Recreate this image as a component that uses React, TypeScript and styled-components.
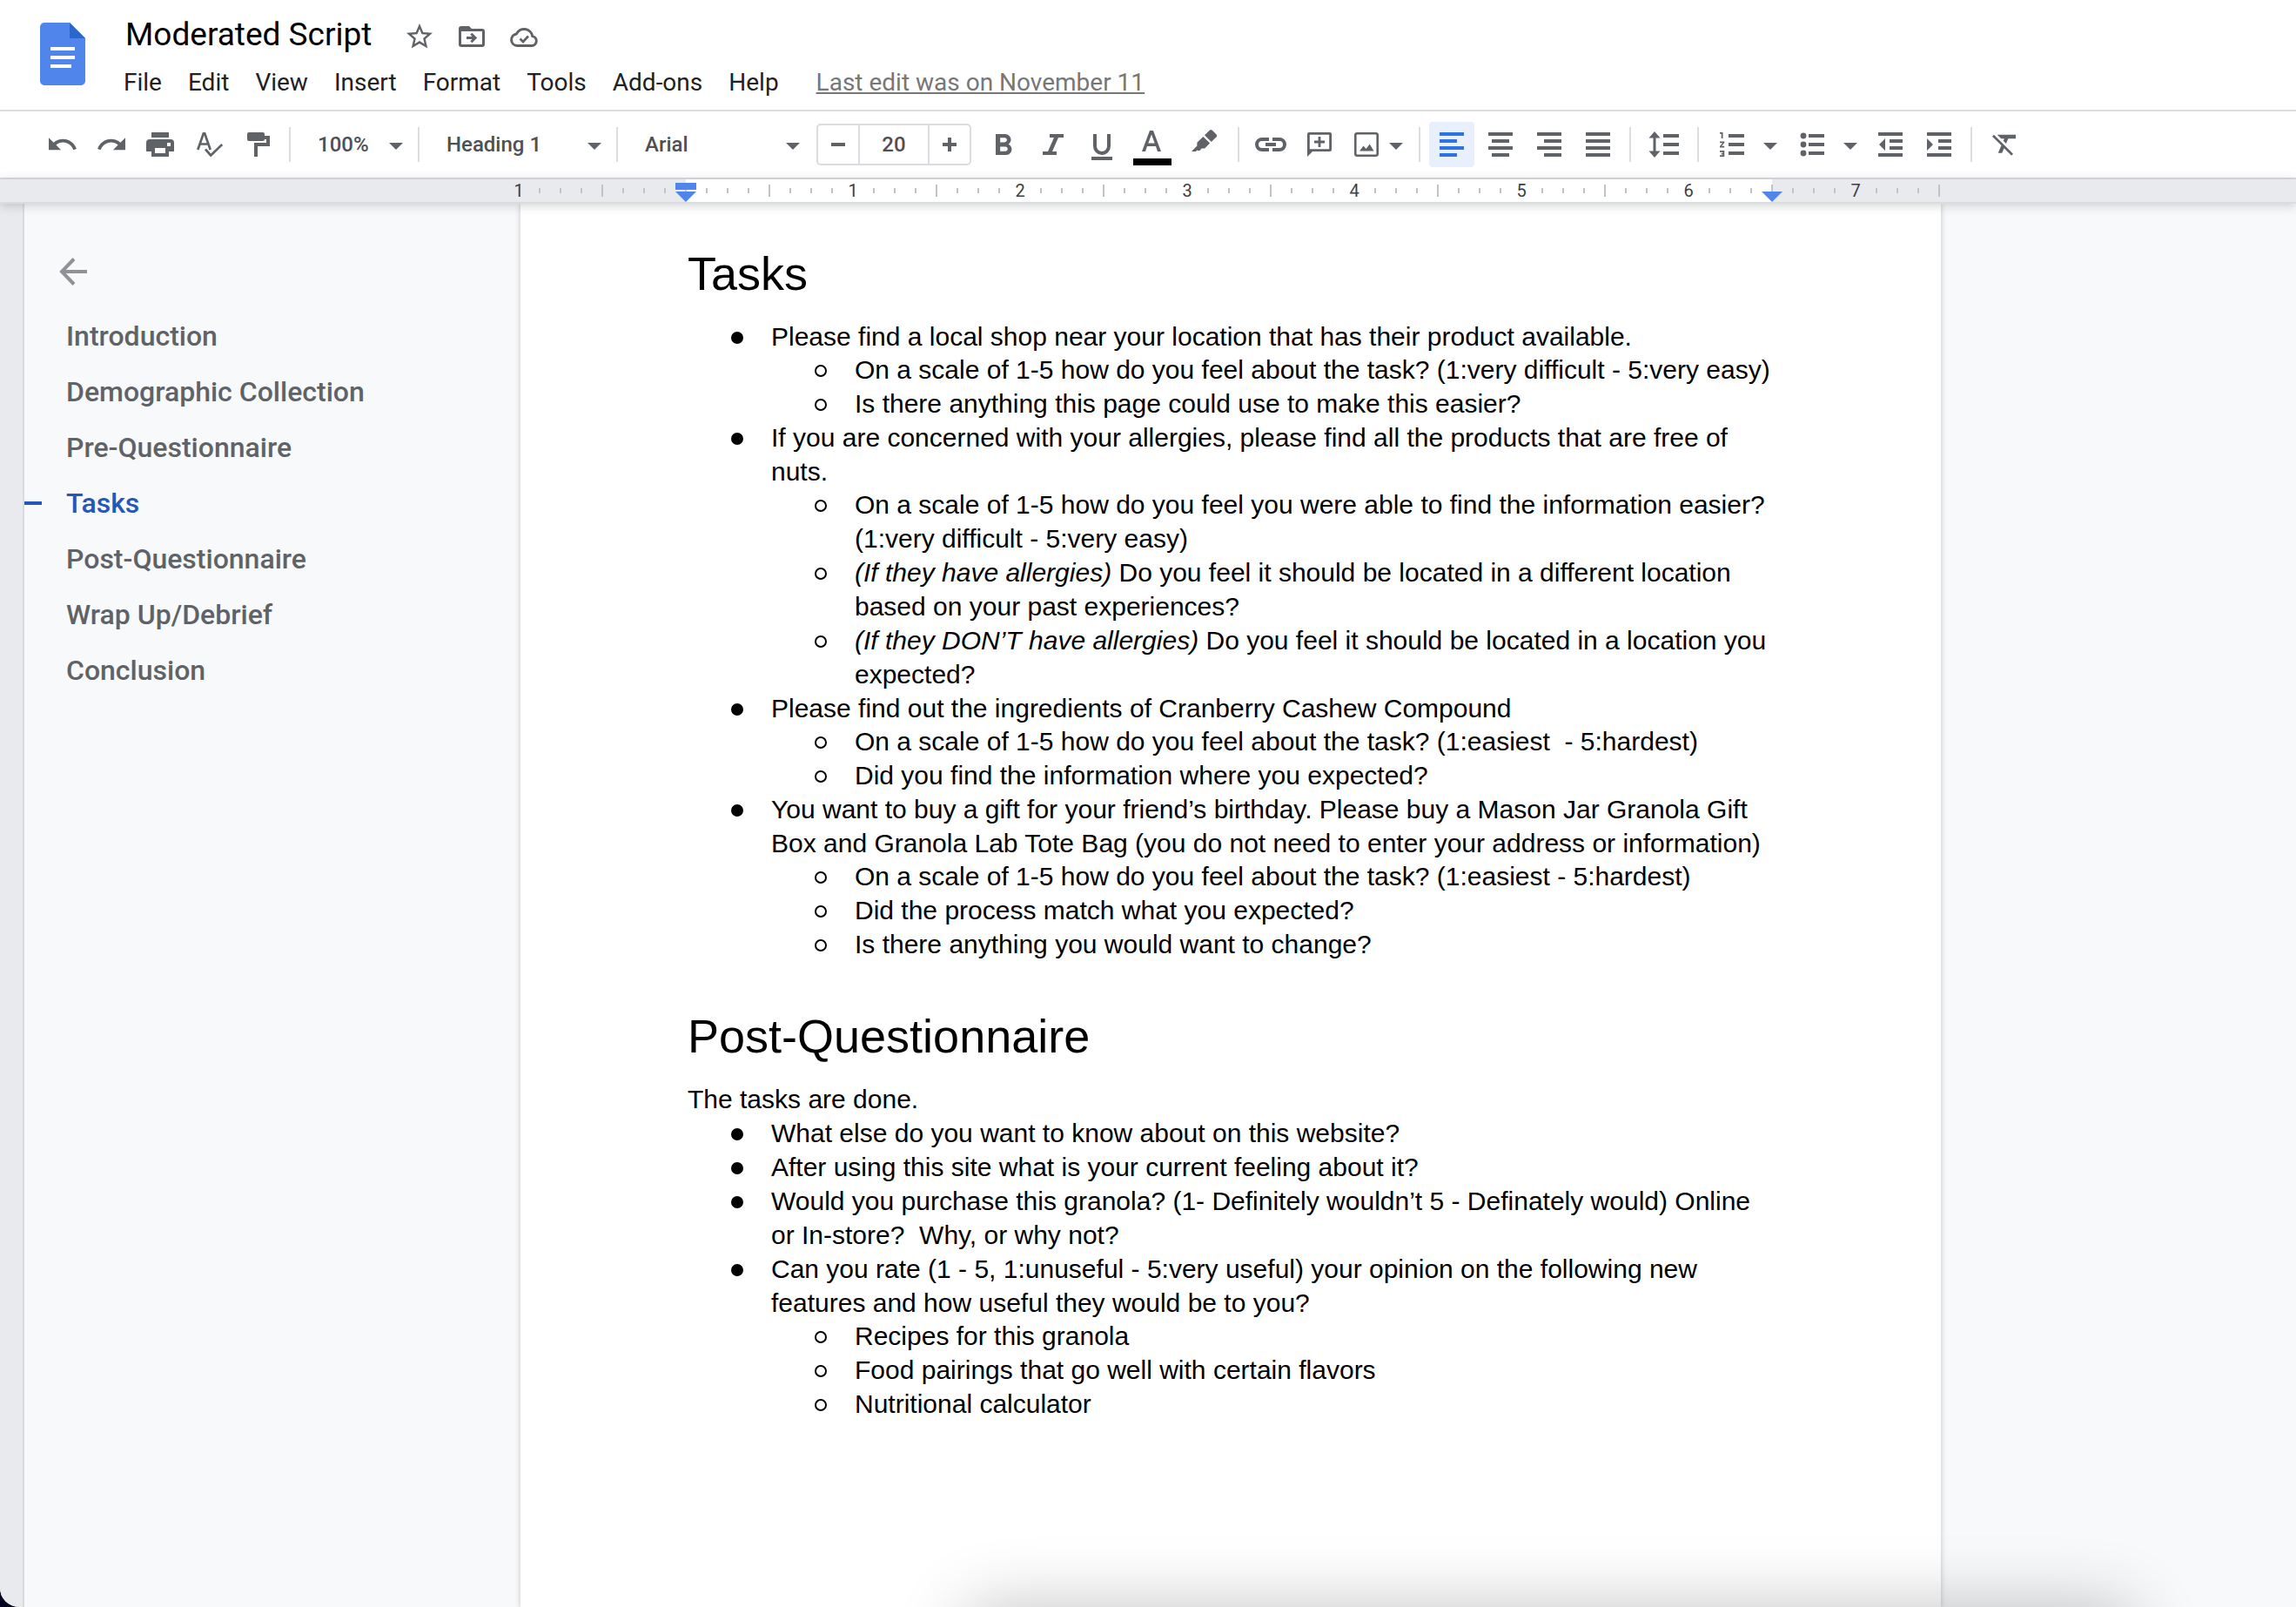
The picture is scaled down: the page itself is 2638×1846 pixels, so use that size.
import React from "react";
import styled, { createGlobalStyle } from "styled-components";

const ICON = "#5f6368";
const LINE = "#dadce0";

const GlobalStyle = createGlobalStyle`
  *, *::before { box-sizing: border-box; }
  body { margin: 0; background: #00001f; }
  button, input, select { font: inherit; color: inherit; }
  button { border: 0; padding: 0; background: none; cursor: pointer; }
`;

const Window = styled.div`
  position: relative;
  display: flex;
  flex-direction: column;
  min-height: 100vh;
  overflow: hidden;
  border-bottom-left-radius: 22px;
  background: #f8f9fb;
  font-family: Roboto, "Liberation Sans", sans-serif;
  color: #202124;
`;

const DockShadow = styled.div`
  position: absolute;
  top: 100%;
  left: 42%;
  right: 7%;
  height: 120px;
  border-radius: 30px;
  box-shadow: 0 0 80px rgba(0, 0, 0, 0.24);
  pointer-events: none;
`;

/* ---------- header ---------- */

const Header = styled.header`
  display: flex;
  align-items: flex-start;
  gap: 29px;
  height: 128px;
  padding-left: 46px;
  background: #fff;
  border-bottom: 2px solid ${LINE};
`;

const Logo = styled.a`
  display: block;
  height: 72px;
  margin-top: 26px;
`;

const HeaderMain = styled.div`
  display: flex;
  flex-direction: column;
  gap: 11px;
  padding-top: 20px;
`;

const TitleRow = styled.div`
  display: flex;
  align-items: center;
  gap: 24px;
  padding-left: 17px;
`;

const TitleInput = styled.input`
  width: 296px;
  height: 44px;
  padding: 0 0 6px;
  border: 0;
  outline: 0;
  background: none;
  color: #000;
  font-size: 37px;
`;

const TitleButton = styled.button`
  display: flex;
  width: 36px;
  height: 36px;
  color: ${ICON};
`;

const MenuBar = styled.nav`
  display: flex;
  align-items: center;
`;

const MenuButton = styled.button`
  height: 40px;
  padding: 0 15px;
  font-size: 28px;
  line-height: 40px;
`;

const LastEdit = styled.a`
  margin-left: 28px;
  color: #777;
  font-size: 28px;
  line-height: 40px;
  text-decoration: underline;
`;

/* ---------- toolbar ---------- */

const Toolbar = styled.div`
  display: flex;
  align-items: center;
  gap: 4px;
  height: 78px;
  padding-left: 46px;
  background: #fff;
  border-bottom: 2px solid ${LINE};
  color: ${ICON};
  font-size: 24px;
  font-weight: 500;
`;

const Tool = styled.button<{ $active?: boolean; $width?: number }>`
  display: flex;
  align-items: center;
  justify-content: center;
  flex: none;
  width: ${(p) => p.$width ?? 52}px;
  height: 52px;
  border-radius: 4px;
  background: ${(p) => (p.$active ? "#e8f0fe" : "none")};
  color: ${(p) => (p.$active ? "#2f73e0" : ICON)};
`;

const MenuTool = styled.button<{ $pad: number; $gap: number }>`
  display: flex;
  align-items: center;
  flex: none;
  gap: ${(p) => p.$gap}px;
  height: 52px;
  padding: 0 8px 0 ${(p) => p.$pad}px;
  color: ${ICON};
`;

const Divider = styled.span`
  flex: none;
  width: 2px;
  height: 40px;
  margin: 0 6px;
  background: ${LINE};
`;

const SelectBox = styled.div<{ $width: number }>`
  display: grid;
  align-items: center;
  flex: none;
  width: ${(p) => p.$width}px;
  height: 52px;

  > * { grid-area: 1 / 1; }
  > svg { justify-self: end; margin-right: 7px; pointer-events: none; }
`;

const Select = styled.select`
  width: 100%;
  height: 52px;
  padding: 0 21px;
  border: 0;
  outline: 0;
  background: none;
  appearance: none;
  color: #4d5054;
`;

const CaretSvg = styled.svg`
  display: block;
  flex: none;
  width: 16px;
  height: 8px;
  margin-top: 4px;
`;

const Stepper = styled.div`
  display: flex;
  flex: none;
  height: 48px;
  margin: 0 8px;
  border: 2px solid ${LINE};
  border-radius: 5px;
`;

const StepButton = styled.button`
  display: flex;
  align-items: center;
  justify-content: center;
  width: 46px;
`;

const SizeInput = styled.input`
  width: 82px;
  padding: 0;
  border: solid ${LINE};
  border-width: 0 2px;
  outline: 0;
  background: none;
  color: #4d5054;
  text-align: center;
`;

const IconSvg = styled.svg`
  display: block;
  flex: none;
  width: 36px;
  height: 36px;
  overflow: visible;
`;

/* ---------- ruler ---------- */

const Ruler = styled.div`
  position: relative;
  z-index: 1;
  height: 28px;
  padding-left: 584px;
  border-bottom: 2px solid ${LINE};
  background: linear-gradient(#fff, #fff) 788px 0 / 1248px 100% no-repeat #e8eaed;
  box-shadow: 0 2px 12px rgba(60, 64, 67, 0.24);
`;

const RulerTrack = styled.div`
  position: relative;
  display: flex;
  align-items: center;
  height: 26px;
`;

const RulerCell = styled.span`
  display: flex;
  flex: none;
  justify-content: center;
  width: 24px;
  color: #3c4043;
  font-size: 20px;
  line-height: 26px;
`;

const Tick = styled.i<{ $tall: boolean }>`
  width: 2px;
  height: ${(p) => (p.$tall ? 14 : 6)}px;
  background: #c0c3c8;
`;

const IndentMarker = styled.svg<{ $x: number }>`
  position: absolute;
  bottom: 0;
  left: ${(p) => p.$x}px;
  width: 24px;
  height: 22px;
`;

/* ---------- workspace ---------- */

const Workspace = styled.div`
  display: flex;
  flex: 1;
`;

const EdgeRuler = styled.div`
  flex: none;
  width: 28px;
  border-right: 2px solid #d8dadb;
  background: #e8eaed;
`;

const Outline = styled.aside`
  flex: none;
  width: 570px;
  padding: 60px 0 0 36px;
`;

const BackButton = styled.button`
  display: flex;
  margin-bottom: 24px;
  color: #909296;
`;

const OutlineList = styled.ul`
  margin: 0;
  padding: 0;
  list-style: none;
`;

const OutlineItem = styled.li<{ $current?: boolean }>`
  display: flex;
  align-items: center;
  gap: 28px;
  height: 64px;
  margin-left: -36px;

  &::before {
    content: "";
    width: 20px;
    height: 4px;
    background: ${(p) => (p.$current ? "#2457b8" : "transparent")};
  }
`;

const OutlineLink = styled.a<{ $current?: boolean }>`
  color: ${(p) => (p.$current ? "#2457b8" : ICON)};
  font-size: 32px;
  font-weight: 500;
  line-height: 40px;
  text-decoration: none;
`;

const Page = styled.main`
  flex: none;
  width: 1632px;
  padding: 45px 190px 190px 192px;
  background: #fff;
  box-shadow: 0 0 6px rgba(60, 64, 67, 0.3);
  color: #000;
  font-family: "Liberation Sans", Arial, sans-serif;
  font-size: 30px;
  line-height: 39px;
`;

const Heading = styled.h1`
  margin: 0 0 18px;
  font-size: 54px;
  font-weight: 400;
  line-height: 70px;

  ul + & { margin-top: 51px; }
`;

const Paragraph = styled.p`
  margin: 0;
`;

const BulletList = styled.ul`
  margin: 0;
  padding: 0 0 0 50px;
  list-style: none;

  & & { margin-top: -1px; }
`;

const BulletItem = styled.li<{ $level: number }>`
  display: grid;
  grid-template-columns: 46px 1fr;

  &::before {
    content: "";
    width: 14px;
    height: 14px;
    margin-top: 14px;
    border: ${(p) => (p.$level === 1 ? 7 : 2)}px solid #000;
    border-radius: 50%;
  }
`;

const ItemText = styled.div`
  white-space: pre-line;
`;

/* ---------- icons ---------- */

const icons = {
  star: (
    <path transform="scale(1.5)" d="M22 9.24l-7.19-.62L12 2 9.19 8.63 2 9.24l5.46 4.73L5.82 21 12 17.27 18.18 21l-1.63-7.03L22 9.24zM12 15.4l-3.76 2.27 1-4.28-3.32-2.88 4.38-.38L12 6.1l1.71 4.04 4.38.38-3.32 2.88 1 4.28L12 15.4z" />
  ),
  move: (
    <>
      <path fillRule="evenodd" d="M6 6h9l3 3h12a3 3 0 0 1 3 3v15a3 3 0 0 1-3 3H6a3 3 0 0 1-3-3V9a3 3 0 0 1 3-3zm0 6v15h24V12z" />
      <path d="M12 18h6.500l-2.200-2.200 2.100-2.100 5.800 5.800-5.800 5.800-2.100-2.100 2.200-2.200H12z" />
    </>
  ),
  cloud: (
    <g fill="none" stroke="currentColor" strokeWidth="3">
      <path d="M10 28.500h17a5.500 5.500 0 0 0 .8-10.900A9.800 9.800 0 0 0 9.300 15 6.800 6.800 0 0 0 10 28.500z" />
      <path d="M13.500 20.500l3.500 3.500 6-6.500" strokeWidth="2.700" />
    </g>
  ),
  print: (
    <path fillRule="evenodd" d="M8 4h20v6H8zM6 12h24a4 4 0 0 1 4 4v10h-6v6H8v-6H2V16a4 4 0 0 1 4-4zm6 10v6h12v-6zM26 16v4h4v-4z" />
  ),
  spell: (
    <g fill="none" stroke="currentColor" strokeWidth="2.700">
      <path d="M5.300 24L11.800 5.300h1.400L19.700 24M8 17.500h9" />
      <path d="M14 23.500l6.200 7L33.200 18" />
    </g>
  ),
  paint: <path d="M8 4h16a2 2 0 0 1 2 2v2h6v12H18v12h-4V16h14v-4h-2a2 2 0 0 1-2 2H8a2 2 0 0 1-2-2V6a2 2 0 0 1 2-2z" />,
  italic: <path d="M14 6h16v4h-6l-7 16h5v4H6v-4h6l7-16h-5z" />,
  underline: (
    <>
      <path d="M10 6v14a8 8 0 0 0 16 0V6" fill="none" stroke="currentColor" strokeWidth="4" />
      <path d="M6 32h24v4H6z" />
    </>
  ),
  textColor: (
    <>
      <path fillRule="evenodd" d="M17 2h4l9 24h-4l-2-6H14l-2 6H8zm-1.700 14.500h7.400L19 6.500z" />
      <path d="M-2 34h44v8H-2z" fill="#000" />
    </>
  ),
  marker: (
    <>
      <path d="M26 1.500a2 2 0 0 1 2.600 0l5 5a2 2 0 0 1 0 2.800L27.800 15 20 7.300z" />
      <path d="M18.400 8.900l7.700 7.700-6 5.800h-3.500L14.500 25h-2.800v-1l-1.700 2H5l6.400-6.600v-3.600z" />
    </>
  ),
  link: (
    <path d="M16 12H8a6 6 0 0 0 0 12h8M20 12h8a6 6 0 0 1 0 12h-8M12 18h12" fill="none" stroke="currentColor" strokeWidth="4" />
  ),
  comment: (
    <>
      <path fillRule="evenodd" d="M6 4h24a2 2 0 0 1 2 2v18a2 2 0 0 1-2 2H10l-6 6V6a2 2 0 0 1 2-2zm.8 2.800v16.400h22.400V6.800z" />
      <path d="M16.600 9h2.800v4.600H24v2.800h-4.600V21h-2.800v-4.600H12v-2.800h4.600z" />
    </>
  ),
  image: (
    <>
      <rect x="5.300" y="5.300" width="25.400" height="25.400" rx="2" fill="none" stroke="currentColor" strokeWidth="2.600" />
      <path d="M10 25.500l4.500-6 3 3.600 4.200-5.600 4.800 8z" />
    </>
  ),
  left: <path d="M4 4h28v4H4zM4 12h20v4H4zM4 20h28v4H4zM4 28h20v4H4z" />,
  center: <path d="M4 4h28v4H4zM8 12h20v4H8zM4 20h28v4H4zM8 28h20v4H8z" />,
  right: <path d="M4 4h28v4H4zM12 12h20v4H12zM4 20h28v4H4zM12 28h20v4H12z" />,
  justify: <path d="M4 4h28v4H4zM4 12h28v4H4zM4 20h28v4H4zM4 28h28v4H4z" />,
  spacing: <path d="M7 3l6.500 7.500h-5v15h5L7 33 .5 25.500h5v-15h-5zM17 6h18v4H17zM17 16h18v4H17zM17 26h18v4H17z" />,
  numbered: (
    <>
      <path transform="translate(.5 -3) scale(1.750)" d="M2 17h2v.5H3v1h1v.5H2v1h3v-4H2v1zm1-9h1V4H2v1h1v3zm-1 3h1.800L2 13.100v.9h3v-1H3.200L5 10.900V10H2v1z" />
      <path d="M14 6h18v4H14zM14 16h18v4H14zM14 26h18v4H14z" />
    </>
  ),
  bulleted: (
    <>
      <circle cx="8" cy="8" r="3.400" />
      <circle cx="8" cy="18" r="3.400" />
      <circle cx="8" cy="28" r="3.400" />
      <path d="M14 6h18v4H14zM14 16h18v4H14zM14 26h18v4H14z" />
    </>
  ),
  outdent: <path d="M4 4h28v4H4zM17 12h15v4H17zM17 20h15v4H17zM4 28h28v4H4zM12 11v14l-7-7z" />,
  indent: <path d="M4 4h28v4H4zM17 12h15v4H17zM17 20h15v4H17zM4 28h28v4H4zM4 11v14l7-7z" />,
  minus: <path d="M10 16h16v4H10z" />,
  plus: <path d="M16 10h4v6h6v4h-6v6h-4v-6h-6v-4h6z" />,
  back: <path d="M36 18H8M21 3.500L7 18l14 14.500" fill="none" stroke="currentColor" strokeWidth="4" />,
};

const boxedIcons: Record<string, [string, string]> = {
  undo: ["0.7 0.5 23.1 23.1", "M12.5 8c-2.65 0-5.05.99-6.9 2.6L2 7v9h9l-3.62-3.62c1.39-1.16 3.16-1.88 5.12-1.88 3.54 0 6.55 2.31 7.6 5.5l2.37-.78C21.08 11.03 17.15 8 12.5 8z"],
  redo: ["0.2 0.5 23.1 23.1", "M18.4 10.6C16.55 8.99 14.15 8 11.5 8c-4.65 0-8.58 3.03-9.96 7.22L3.9 16c1.05-3.19 4.05-5.5 7.6-5.5 1.95 0 3.73.72 5.12 1.88L13 16h9V7l-3.6 3.6z"],
  bold: ["2.33 0.5 21 21", "M15.6 10.79c.97-.67 1.65-1.77 1.65-2.79 0-2.26-1.75-4-4-4H7v14h7.04c2.09 0 3.71-1.7 3.71-3.79 0-1.52-.86-2.82-2.15-3.42zM10 6.5h3c.83 0 1.5.67 1.5 1.5s-.67 1.5-1.5 1.5h-3v-3zm3.5 9H10v-3h3.5c.83 0 1.5.67 1.5 1.5s-.67 1.5-1.5 1.5z"],
  clear: ["-1.33 0.5 24 24", "M3.27 5L2 6.27l6.97 6.97L6.5 19h3l1.57-3.66L16.73 21 18 19.73 3.55 5.27 3.27 5zM6 5v.18L8.82 8h2.4l-.72 1.68 2.1 2.1L14.21 8H20V5H6z"],
};

function Icon({ name }: { name: string }) {
  const boxed = boxedIcons[name];
  return (
    <IconSvg viewBox={boxed ? boxed[0] : "0 0 36 36"} fill="currentColor" aria-hidden="true">
      {boxed ? <path d={boxed[1]} /> : icons[name as keyof typeof icons]}
    </IconSvg>
  );
}

const Caret = () => (
  <CaretSvg viewBox="0 0 16 8" fill={ICON} aria-hidden="true">
    <path d="M0 0h16L8 8z" />
  </CaretSvg>
);

type ToolDef = { icon: string; label: string; active?: boolean; width?: number };

const Tools = ({ items }: { items: ToolDef[] }) => (
  <>
    {items.map((t) => (
      <Tool key={t.icon} type="button" aria-label={t.label} $active={t.active} $width={t.width}>
        <Icon name={t.icon} />
      </Tool>
    ))}
  </>
);

const Dropdown = ({ label, width, options }: { label: string; width: number; options: string[] }) => (
  <SelectBox $width={width}>
    <Select aria-label={label} defaultValue={options[0]}>
      {options.map((o) => (
        <option key={o}>{o}</option>
      ))}
    </Select>
    <Caret />
  </SelectBox>
);

/* ---------- document content ---------- */

type Item = { text: React.ReactNode; children?: Item[] };

const taskItems: Item[] = [
  {
    text: "Please find a local shop near your location that has their product available.",
    children: [
      { text: "On a scale of 1-5 how do you feel about the task? (1:very difficult - 5:very easy)" },
      { text: "Is there anything this page could use to make this easier?" },
    ],
  },
  {
    text: "If you are concerned with your allergies, please find all the products that are free of\nnuts.",
    children: [
      { text: "On a scale of 1-5 how do you feel you were able to find the information easier?\n(1:very difficult - 5:very easy)" },
      { text: <><em>(If they have allergies)</em>{" Do you feel it should be located in a different location"}<br />based on your past experiences?</> },
      { text: <><em>(If they DON’T have allergies)</em>{" Do you feel it should be located in a location you"}<br />expected?</> },
    ],
  },
  {
    text: "Please find out the ingredients of Cranberry Cashew Compound",
    children: [
      { text: "On a scale of 1-5 how do you feel about the task? (1:easiest \u00a0- 5:hardest)" },
      { text: "Did you find the information where you expected?" },
    ],
  },
  {
    text: "You want to buy a gift for your friend’s birthday. Please buy a Mason Jar Granola Gift\nBox and Granola Lab Tote Bag (you do not need to enter your address or information)",
    children: [
      { text: "On a scale of 1-5 how do you feel about the task? (1:easiest - 5:hardest)" },
      { text: "Did the process match what you expected?" },
      { text: "Is there anything you would want to change?" },
    ],
  },
];

const postItems: Item[] = [
  { text: "What else do you want to know about on this website?" },
  { text: "After using this site what is your current feeling about it?" },
  { text: "Would you purchase this granola? (1- Definitely wouldn’t 5 - Definately would) Online\nor In-store? \u00a0Why, or why not?" },
  {
    text: "Can you rate (1 - 5, 1:unuseful - 5:very useful) your opinion on the following new\nfeatures and how useful they would be to you?",
    children: [
      { text: "Recipes for this granola" },
      { text: "Food pairings that go well with certain flavors" },
      { text: "Nutritional calculator" },
    ],
  },
];

const Bullets = ({ items, level = 1 }: { items: Item[]; level?: number }) => (
  <BulletList>
    {items.map((item, i) => (
      <BulletItem key={i} $level={level}>
        <div>
          <ItemText>{item.text}</ItemText>
          {item.children && <Bullets items={item.children} level={level + 1} />}
        </div>
      </BulletItem>
    ))}
  </BulletList>
);

const menus = ["File", "Edit", "View", "Insert", "Format", "Tools", "Add-ons", "Help"];
const sections = ["Introduction", "Demographic Collection", "Pre-Questionnaire", "Tasks", "Post-Questionnaire", "Wrap Up/Debrief", "Conclusion"];

// One cell for each eighth of an inch; the margin starts at the ninth cell.
const rulerCells = Array.from({ length: 69 }, (_, i) => {
  const inch = (i - 8) / 8;
  if (i % 8 === 0 && inch !== 0) return <RulerCell key={i}>{Math.abs(inch)}</RulerCell>;
  return (
    <RulerCell key={i}>
      <Tick $tall={i % 4 === 0} />
    </RulerCell>
  );
});

export default function App() {
  return (
    <>
      <GlobalStyle />
      <Window>
        <Header>
          <Logo href="#" aria-label="Docs home">
            <svg width="52" height="72" viewBox="0 0 52 72" aria-hidden="true">
              <path d="M5 0h29l18 18v49a5 5 0 0 1-5 5H5a5 5 0 0 1-5-5V5a5 5 0 0 1 5-5z" fill="#5086ec" />
              <path d="M34 0l18 18H34z" fill="#2a66cc" />
              <path d="M12 28h28v4H12zM12 38h28v4H12zM12 48h24v4H12z" fill="#fff" />
            </svg>
          </Logo>
          <HeaderMain>
            <TitleRow>
              <TitleInput aria-label="Document title" defaultValue="Moderated Script" />
              <TitleButton type="button" aria-label="Star"><Icon name="star" /></TitleButton>
              <TitleButton type="button" aria-label="Move"><Icon name="move" /></TitleButton>
              <TitleButton type="button" aria-label="Document status"><Icon name="cloud" /></TitleButton>
            </TitleRow>
            <MenuBar>
              {menus.map((m) => (
                <MenuButton key={m} type="button">{m}</MenuButton>
              ))}
              <LastEdit href="#">Last edit was on November 11</LastEdit>
            </MenuBar>
          </HeaderMain>
        </Header>

        <Toolbar role="toolbar" aria-label="Formatting">
          <Tools
            items={[
              { icon: "undo", label: "Undo" },
              { icon: "redo", label: "Redo" },
              { icon: "print", label: "Print" },
              { icon: "spell", label: "Spelling check" },
              { icon: "paint", label: "Paint format" },
            ]}
          />
          <Divider />
          <Dropdown label="Zoom" width={126} options={["100%", "75%", "50%"]} />
          <Divider />
          <Dropdown label="Style" width={206} options={["Heading 1", "Title", "Heading 2"]} />
          <Divider />
          <Dropdown label="Font" width={206} options={["Arial", "Roboto", "Georgia"]} />
          <Stepper>
            <StepButton type="button" aria-label="Decrease font size"><Icon name="minus" /></StepButton>
            <SizeInput aria-label="Font size" defaultValue="20" />
            <StepButton type="button" aria-label="Increase font size"><Icon name="plus" /></StepButton>
          </Stepper>
          <Tools
            items={[
              { icon: "bold", label: "Bold" },
              { icon: "italic", label: "Italic" },
              { icon: "underline", label: "Underline" },
              { icon: "textColor", label: "Text color" },
              { icon: "marker", label: "Highlight color", width: 60 },
            ]}
          />
          <Divider />
          <Tools
            items={[
              { icon: "link", label: "Insert link" },
              { icon: "comment", label: "Add comment" },
            ]}
          />
          <MenuTool type="button" aria-label="Insert image" $pad={6} $gap={8}>
            <Icon name="image" />
            <Caret />
          </MenuTool>
          <Divider />
          <Tools
            items={[
              { icon: "left", label: "Left align", active: true },
              { icon: "center", label: "Center align" },
              { icon: "right", label: "Right align" },
              { icon: "justify", label: "Justify" },
            ]}
          />
          <Divider />
          <Tools items={[{ icon: "spacing", label: "Line spacing", width: 56 }]} />
          <Divider />
          <MenuTool type="button" aria-label="Numbered list" $pad={10} $gap={18}>
            <Icon name="numbered" />
            <Caret />
          </MenuTool>
          <MenuTool type="button" aria-label="Bulleted list" $pad={10} $gap={18}>
            <Icon name="bulleted" />
            <Caret />
          </MenuTool>
          <Tools
            items={[
              { icon: "outdent", label: "Decrease indent" },
              { icon: "indent", label: "Increase indent" },
            ]}
          />
          <Divider />
          <Tools items={[{ icon: "clear", label: "Clear formatting" }]} />
        </Toolbar>

        <Ruler>
          <RulerTrack>
            {rulerCells}
            <IndentMarker $x={192} viewBox="0 0 24 22" aria-hidden="true">
              <path d="M0 0h24v8H0zM0 10h24L12 22z" fill="#5086ec" />
            </IndentMarker>
            <IndentMarker $x={1440} viewBox="0 0 24 22" aria-hidden="true">
              <path d="M0 10h24L12 22z" fill="#5086ec" />
            </IndentMarker>
          </RulerTrack>
        </Ruler>

        <Workspace>
          <EdgeRuler />
          <Outline>
            <BackButton type="button" aria-label="Close document outline"><Icon name="back" /></BackButton>
            <OutlineList>
              {sections.map((s) => (
                <OutlineItem key={s} $current={s === "Tasks"}>
                  <OutlineLink href="#" $current={s === "Tasks"}>{s}</OutlineLink>
                </OutlineItem>
              ))}
            </OutlineList>
          </Outline>
          <Page>
            <Heading>Tasks</Heading>
            <Bullets items={taskItems} />
            <Heading>Post-Questionnaire</Heading>
            <Paragraph>The tasks are done.</Paragraph>
            <Bullets items={postItems} />
          </Page>
        </Workspace>
        <DockShadow />
      </Window>
    </>
  );
}
